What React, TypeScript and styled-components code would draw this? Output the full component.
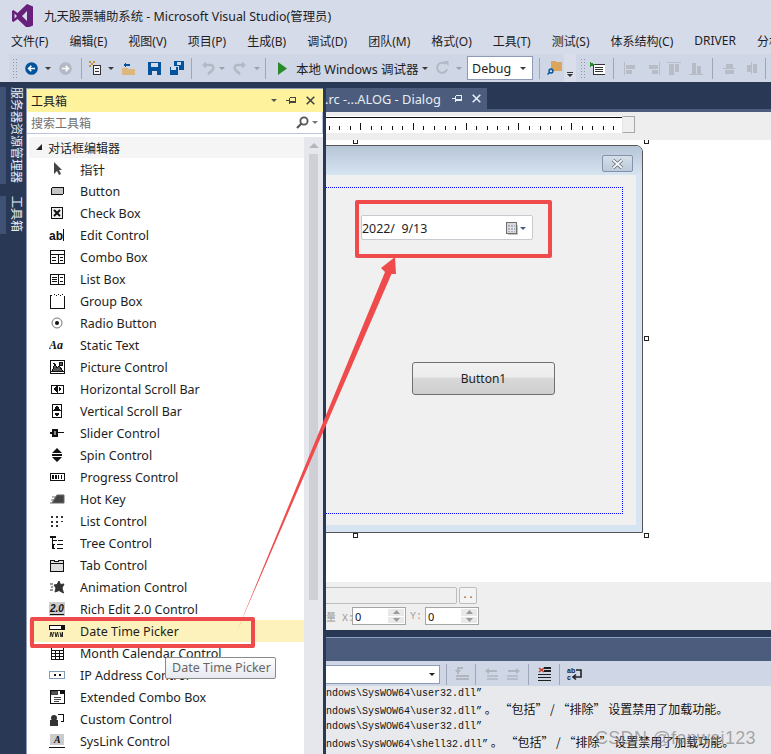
import React from "react";
import styled, { createGlobalStyle } from "styled-components";

const GlobalStyle = createGlobalStyle`
  html, body { margin: 0; padding: 0; background: #293955; }
  * { box-sizing: border-box; }
`;

const UI_FONT = `"Noto Sans", "Noto Sans CJK SC", sans-serif`;
const CJK_FONT = `"Noto Sans CJK SC", "Noto Sans", sans-serif`;
const MONO_FONT = `"Liberation Mono", "Noto Sans CJK SC", monospace`;

const Page = styled.div`
  position: relative;
  width: 771px;
  height: 754px;
  overflow: hidden;
  display: flex;
  flex-direction: column;
  background: #293955;
  color: #1e1e1e;
  font-family: ${UI_FONT};
  font-size: 12px;
`;

const TitleBar = styled.div`
  height: 27px;
  flex: none;
  display: flex;
  align-items: center;
  gap: 11px;
  padding: 5px 0 0 12px;
  background: #d6dbe9;
  font-size: 12.4px;
`;

const MenuBar = styled.div`
  height: 27px;
  flex: none;
  display: flex;
  align-items: center;
  gap: 21px;
  padding-left: 11px;
  background: #d6dbe9;
  white-space: nowrap;
  font-size: 12px;
`;

const ToolStrip = styled.div`
  height: 28px;
  flex: none;
  display: flex;
  align-items: center;
  background: linear-gradient(90deg, #d6dbe9 0, #d6dbe9 9px, #cfd6e5 9px);
  padding-left: 12px;
`;

const Grip = styled.div`
  width: 6px;
  height: 20px;
  flex: none;
  background-image: radial-gradient(#8f97ab 0.7px, transparent 0.8px);
  background-size: 3px 3px;
`;

const Slot = styled.div<{ $w: number }>`
  width: ${(p) => p.$w}px;
  height: 22px;
  flex: none;
  display: flex;
  align-items: center;
  justify-content: center;
`;

const Sep = styled.div<{ $m?: number }>`
  width: 1px;
  height: 21px;
  flex: none;
  background: #9ea6b8;
  margin: 0 ${(p) => p.$m ?? 6}px;
`;

const Caret = styled.div<{ $c?: string }>`
  width: 0;
  height: 0;
  flex: none;
  border-left: 3.5px solid transparent;
  border-right: 3.5px solid transparent;
  border-top: 3.5px solid ${(p) => p.$c ?? "#3a3a3a"};
`;

const RunLabel = styled.span`
  width: 126px;
  flex: none;
  white-space: nowrap;
  font-size: 12.5px;
  margin-left: 2px;
`;

const ConfigCombo = styled.div`
  width: 66px;
  height: 24px;
  flex: none;
  display: flex;
  align-items: center;
  justify-content: space-between;
  padding: 0 6px 0 4px;
  background: #fff;
  border: 1px solid #8e9bb5;
  font-size: 12.5px;
`;

const Overflow = styled.div`
  width: 12px;
  height: 28px;
  flex: none;
  background: #d9deea;
  display: flex;
  flex-direction: column;
  align-items: center;
  justify-content: flex-end;
  gap: 1px;
  padding-bottom: 5px;
`;

const OverflowBar = styled.div`
  width: 6px;
  height: 1px;
  background: #333;
`;

const Main = styled.div`
  flex: 1;
  min-height: 0;
  display: flex;
`;

const Rail = styled.div`
  width: 26px;
  flex: none;
  display: flex;
  flex-direction: column;
  gap: 12px;
  padding-top: 5px;
  background: #293955;
`;

const RailItem = styled.div<{ $h: number }>`
  height: ${(p) => p.$h}px;
  padding-right: 2px;
  background: linear-gradient(90deg, #3f5174 0, #3f5174 6px, transparent 6px);
  color: #e4ecf6;
  font-family: ${CJK_FONT};
  font-size: 12px;
  line-height: 14px;
  writing-mode: vertical-rl;
  text-orientation: sideways;
  white-space: nowrap;
`;

const Toolbox = styled.div`
  width: 297px;
  flex: none;
  margin-top: 6px;
  display: flex;
  flex-direction: column;
  background: #fff;
  border-left: 1px solid #8d9ab8;
  border-top: 1px solid #8d9ab8;
`;

const BoxHeader = styled.div`
  height: 23px;
  flex: none;
  display: flex;
  align-items: center;
  gap: 9px;
  padding: 0 8px 0 4px;
  background: #fff29d;
  font-family: ${CJK_FONT};
  font-size: 12px;
`;

const BoxTitle = styled.span`
  flex: 1;
`;

const SearchRow = styled.div`
  height: 22px;
  flex: none;
  display: flex;
  align-items: center;
  gap: 3px;
  padding: 0 4px;
  border-bottom: 1px solid #bcc5da;
  border-right: 1px solid #bcc5da;
  color: #717171;
  font-family: ${CJK_FONT};
  font-size: 12px;
`;

const SearchText = styled.span`
  flex: 1;
`;

const BoxBody = styled.div`
  flex: 1;
  min-height: 0;
  display: flex;
  border-top: 3px solid #fff;
`;

const List = styled.div`
  width: 277px;
  flex: none;
  padding-left: 2px;
`;

const GroupRow = styled.div`
  height: 21px;
  display: flex;
  align-items: center;
  gap: 6px;
  padding: 0 0 1px 7px;
  background: #f5f5f5;
  font-family: ${CJK_FONT};
  font-size: 12px;
`;

const Row = styled.div<{ $on?: boolean }>`
  height: 22px;
  display: flex;
  align-items: center;
  gap: 15px;
  padding-left: 19px;
  white-space: nowrap;
  font-size: 12.5px;
  background: ${(p) => (p.$on ? "#fdf2bb" : "transparent")};
`;

const RowIcon = styled.div`
  width: 17px;
  height: 18px;
  flex: none;
  display: flex;
  align-items: center;
  justify-content: center;
`;

const Track = styled.div`
  width: 19px;
  flex: none;
  display: flex;
  flex-direction: column;
  align-items: center;
  padding-top: 6px;
  background: #e6e7ec;
`;

const UpArrow = styled.div`
  width: 0;
  height: 0;
  border-left: 5px solid transparent;
  border-right: 5px solid transparent;
  border-bottom: 5px solid #b4b6bf;
`;

const Thumb = styled.div`
  width: 9px;
  height: 446px;
  margin-top: 6px;
  background: #cfd0d6;
`;

const RightCol = styled.div`
  flex: 1;
  min-width: 0;
  margin-left: 3px;
  display: flex;
  flex-direction: column;
`;

const TabStrip = styled.div`
  height: 30px;
  flex: none;
  padding-top: 6px;
  border-bottom: 3px solid #4b5c7c;
`;

const Tab = styled.div`
  width: 161px;
  height: 21px;
  display: flex;
  align-items: center;
  gap: 9px;
  background: #4b5c7c;
  color: #e8eef6;
  font-size: 12.8px;
  white-space: nowrap;
`;

const TabTitle = styled.span`
  width: 118px;
  flex: none;
  margin-left: -1px;
`;

const RulerBand = styled.div`
  height: 28px;
  flex: none;
  display: flex;
  align-items: flex-start;
  padding-top: 4px;
  background: #eeeeef;
`;

const RulerHandle = styled.div`
  width: 13px;
  height: 17px;
  background: #efefef;
  border: 1px solid #a8a8a8;
  border-left-color: #e4e4e4;
`;

const Canvas = styled.div`
  position: relative;
  height: 442px;
  flex: none;
  overflow: hidden;
  background: #fff;
`;

const Dialog = styled.div`
  position: absolute;
  left: -20px;
  top: 5px;
  width: 337px;
  height: 388px;
  display: flex;
  flex-direction: column;
  background: #d7e4f1;
  border: 1px solid #555;
  border-radius: 7px 7px 0 0;
`;

const DialogCaption = styled.div`
  height: 29px;
  flex: none;
  display: flex;
  justify-content: flex-end;
  padding: 9px 9px 0 0;
  background: linear-gradient(#b6c5d7, #d7e4f1);
  border-radius: 6px 6px 0 0;
`;

const CloseBox = styled.div`
  width: 31px;
  height: 17px;
  display: flex;
  align-items: center;
  justify-content: center;
  background: linear-gradient(#d6dfe9, #bccada);
  border: 1px solid #8493ab;
  border-radius: 2px;
`;

const Client = styled.div`
  position: relative;
  height: 350px;
  margin-right: 6px;
  background: #f0f0f0;
`;

const GuideRect = styled.div`
  position: absolute;
  left: -10px;
  top: 12px;
  width: 326px;
  height: 327px;
  border: 1px dotted #0000ff;
`;

const DatePicker = styled.div`
  position: absolute;
  left: 54px;
  top: 40px;
  width: 172px;
  height: 25px;
  display: flex;
  align-items: center;
  gap: 2px;
  padding: 1px 6px 0 0;
  background: #fff;
  border: 1px solid #c9c9d0;
  border-radius: 2px;
  font-size: 12.4px;
`;

const DateText = styled.span`
  flex: 1;
  white-space: pre;
`;

const DialogButton = styled.div`
  position: absolute;
  left: 105px;
  top: 187px;
  width: 143px;
  height: 33px;
  display: flex;
  align-items: center;
  justify-content: center;
  background: linear-gradient(#f2f2f2 0, #ececec 45%, #d8d8d8 50%, #cfcfcf 100%);
  border: 1px solid #707070;
  border-radius: 3px;
  font-size: 12px;
`;

const Handle = styled.div<{ $x: number; $y: number }>`
  position: absolute;
  left: ${(p) => p.$x - 3}px;
  top: ${(p) => p.$y - 3}px;
  width: 5px;
  height: 5px;
  background: #fff;
  border: 1px solid #222;
`;

const PropBar = styled.div`
  height: 48px;
  flex: none;
  display: flex;
  flex-direction: column;
  gap: 3px;
  padding-top: 5px;
  background: #efefef;
  font-family: ${MONO_FONT};
  font-size: 10px;
  color: #9a9a9a;
`;

const PropRow = styled.div`
  display: flex;
  align-items: center;
`;

const PathInput = styled.div`
  width: 131px;
  height: 17px;
  background: #efefef;
  border: 1px solid #bdbdbd;
  border-left: none;
  border-radius: 0 2px 2px 0;
`;

const DotsButton = styled.div`
  width: 18px;
  height: 17px;
  margin-left: 2px;
  text-align: center;
  line-height: 15px;
  color: #555;
  background: #f4f4f4;
  border: 1px solid #bdbdbd;
  border-radius: 2px;
`;

const AxisLabel = styled.span<{ $w: number }>`
  width: ${(p) => p.$w}px;
  flex: none;
  white-space: nowrap;
  text-align: right;
  padding-right: 3px;
`;

const SpinInput = styled.div`
  width: 54px;
  height: 18px;
  display: flex;
  align-items: center;
  justify-content: space-between;
  padding: 0 1px 0 2px;
  background: #fff;
  border: 1px solid #a5a5a5;
  color: #111;
  font-family: ${UI_FONT};
  font-size: 11px;
`;

const SpinBox = styled.div`
  width: 16px;
  height: 14px;
  display: flex;
  flex-direction: column;
  gap: 1px;
`;

const SpinPart = styled.div`
  flex: 1;
  display: flex;
  align-items: center;
  justify-content: center;
  background: #e9e9e9;
`;

const BottomPanel = styled.div`
  flex: 1;
  min-height: 0;
  display: flex;
  flex-direction: column;
  padding-top: 7px;
`;

const PanelHead = styled.div`
  height: 24px;
  flex: none;
  background: #4b5c7c;
  border-top: 1px solid #8ea0bf;
`;

const OutputBar = styled.div`
  height: 26px;
  flex: none;
  display: flex;
  align-items: center;
  background: #cfd6e5;
`;

const SourceCombo = styled.div`
  width: 114px;
  height: 19px;
  flex: none;
  display: flex;
  align-items: center;
  justify-content: flex-end;
  padding-right: 4px;
  background: #fff;
  border: 1px solid #8e9bb5;
  border-left: none;
`;

const OutputBody = styled.div`
  flex: 1;
  margin-top: -1px;
  background: #e8e9ed;
  font-family: ${MONO_FONT};
  font-size: 10px;
  line-height: 15px;
  white-space: pre;
  color: #111;
`;

const OutputCjk = styled.span`
  font-family: ${CJK_FONT};
  font-size: 12px;
`;

const Watermark = styled.div`
  position: absolute;
  left: 595px;
  top: 728px;
  font-family: "Liberation Sans", sans-serif;
  font-size: 18px;
  letter-spacing: 0.3px;
  color: rgba(120, 120, 120, 0.62);
  white-space: nowrap;
`;

const Tooltip = styled.div`
  position: absolute;
  left: 165px;
  top: 657px;
  width: 111px;
  height: 22px;
  padding-left: 6px;
  font-size: 12.5px;
  line-height: 20px;
  color: #666;
  background: linear-gradient(#ffffff, #e6e8f0);
  border: 1px solid #8a8a8a;
  border-radius: 2px;
  white-space: nowrap;
`;

const RedBox = styled.div<{ $x: number; $y: number; $w: number; $h: number }>`
  position: absolute;
  left: ${(p) => p.$x}px;
  top: ${(p) => p.$y}px;
  width: ${(p) => p.$w}px;
  height: ${(p) => p.$h}px;
  border: 4px solid #ef4b4d;
  border-radius: 2px;
`;

const ArrowLayer = styled.svg`
  position: absolute;
  left: 0;
  top: 0;
`;

/* ---------- drawings ---------- */

const Ico = ({ children, w = 16, h = 16 }: { children: React.ReactNode; w?: number; h?: number }) => (
  <svg width={w} height={h} viewBox={`0 0 ${w} ${h}`} fill="none" shapeRendering="crispEdges">
    {children}
  </svg>
);

const K = "#111";

const toolIcons: Record<string, React.ReactNode> = {
  pointer: <path d="M5 1v12l3-3 2 4 2-1-2-4h3z" fill="#444" shapeRendering="auto" />,
  button: <rect x="2.5" y="4.5" width="12" height="7" rx="1.5" fill="#c4c4c4" stroke={K} />,
  check: (
    <>
      <rect x="2.5" y="2.5" width="11" height="11" fill="#eee" stroke={K} />
      <path d="M5 5l6 6M11 5l-6 6" stroke={K} strokeWidth="2" shapeRendering="auto" />
    </>
  ),
  edit: (
    <>
      <text x="0" y="13" fontFamily="Liberation Sans" fontWeight="700" fontSize="12" fill={K}>ab</text>
      <path d="M14.5 2v12" stroke={K} />
    </>
  ),
  combo: (
    <>
      <rect x="1.5" y="1.5" width="14" height="13" fill="#fff" stroke={K} />
      <path d="M1 5.5h15M9.5 5v10M3 8.5h4M3 11.5h4M11 8.5h3M11 11.5h3" stroke={K} />
    </>
  ),
  list: (
    <>
      <rect x="1.5" y="3.5" width="14" height="10" fill="#fff" stroke={K} />
      <path d="M9.5 3v10M3 6.5h5M3 8.5h5M3 10.5h5M11 6.5h3M11 10.5h3" stroke={K} />
    </>
  ),
  group: (
    <>
      <path d="M1.5 3v12.500h14V3M1 2.500h2" stroke={K} />
      <path d="M5 1h1v1H5zM7 2h1v1H7zM9 1h1v1H9zM11 2h1v1h-1zM13 1h1v1h-1z" fill={K} />
    </>
  ),
  radio: (
    <>
      <circle cx="8" cy="8" r="5" fill="#fff" stroke="#777" shapeRendering="auto" />
      <circle cx="8" cy="8" r="2" fill={K} shapeRendering="auto" />
    </>
  ),
  statictext: (
    <text x="0" y="12" fontFamily="Liberation Serif" fontStyle="italic" fontWeight="700" fontSize="12" fill={K}>Aa</text>
  ),
  picture: (
    <>
      <rect x="1.5" y="1.5" width="14" height="13" fill="#fff" stroke={K} />
      <path d="M3 12l3-7 2 4 2-2 4 5zM4 4h2M10 3h3v3h-3z" fill="#555" stroke={K} />
    </>
  ),
  hscroll: (
    <>
      <rect x="2.5" y="4.5" width="12" height="8" fill="#fff" stroke={K} />
      <path d="M8.5 4v8M7 6v4L5 8zM10 6v4l2-2z" fill={K} stroke={K} />
    </>
  ),
  vscroll: (
    <>
      <rect x="3.5" y="1.5" width="9" height="13" fill="#fff" stroke={K} />
      <path d="M4 7.5h8M8 3l2 3H6zM8 13l2-3H6z" fill={K} stroke={K} />
    </>
  ),
  slider: <path d="M1 8h2M4 5h4v6H4zM8 7.5h7" fill="#888" stroke={K} strokeWidth="1.5" />,
  spin: <path d="M8 1l5 5H3zM8 15l5-5H3zM3 7h10v2H3z" fill={K} shapeRendering="auto" />,
  progress: (
    <>
      <rect x="1.5" y="4.5" width="14" height="7" fill="#fff" stroke={K} />
      <path d="M3 6h2v4H3zM6 6h2v4H6zM9 6h1v4H9zM12 6h1v4h-1z" fill={K} />
    </>
  ),
  hotkey: <path d="M8 4h7v8H3zM3 6h4M2 9h3M1 12h2" fill="#444" stroke="#666" shapeRendering="auto" />,
  listctrl: (
    <path d="M2 3h2v2H2zM7 3h2v2H7zM12 3h2v2h-2zM2 8h2v2H2zM7 8h2v2H7zM12 8h2v1h-2zM2 12h2v2H2zM7 12h2v2H7z" fill="#333" />
  ),
  tree: <path d="M1 2h6M3.5 2v12M8 5.5h-4M5.5 9.5H4v4h2M9 5.5h5M8 9.5h6M8 13.5h6" stroke={K} strokeWidth="1.4" />,
  tab: (
    <>
      <path d="M1.5 14.5V3.5h4v1h4v-1h5v11z" fill="#ddd" stroke={K} />
      <path d="M2 6.5h12" stroke={K} />
    </>
  ),
  animation: (
    <path d="M10 2l1.5 3.5L15 5l-2 4 1.5 5-4.5-2.5L6 13l1-4-2-3 3-.5zM1 5h3M2 8h2M1 11h3" fill="#333" stroke="#333" shapeRendering="auto" />
  ),
  rich: (
    <>
      <rect x="0" y="1" width="16" height="14" fill="#ccc" />
      <text x="1" y="11" fontFamily="Liberation Sans" fontStyle="italic" fontWeight="700" fontSize="10" fill={K}>2.0</text>
      <path d="M1 13.5h14" stroke={K} />
    </>
  ),
  date: (
    <>
      <rect x="0.5" y="2.5" width="15" height="4" fill="#fff" stroke={K} />
      <path d="M12 3h3v3h-3z" fill={K} />
      <path d="M1 14l1-5 1.500 5 1-5M6 9l1 5 1.500-5 1 5M11 9l1 5 1.500-5v5" stroke={K} strokeWidth="0.9" shapeRendering="auto" />
    </>
  ),
  month: (
    <path d="M2.5 2.5h12v12h-12zM2 5.5h13M2 8.5h13M2 11.5h13M6.5 5v10M10.5 5v10" stroke={K} fill="#fff" />
  ),
  ip: (
    <>
      <rect x="0.5" y="4.5" width="15" height="7" fill="#fff" stroke="#7f9db9" />
      <path d="M5 7h2v2H5zM10 7h2v2h-2z" fill={K} />
    </>
  ),
  extcombo: (
    <>
      <rect x="1.5" y="1.5" width="14" height="13" fill="#fff" stroke={K} />
      <path d="M2 2h6v3H2zM5 8.5h7M5 10.5h7M5 12.5h5" fill="#555" stroke="#444" />
      <path d="M11 2h4v3h-4z" fill={K} />
    </>
  ),
  custom: (
    <>
      <rect x="1" y="9" width="8" height="6" fill="#333" />
      <circle cx="5" cy="7" r="3" fill="#333" shapeRendering="auto" />
      <path d="M8.5 3.5h6v7h-3" stroke={K} />
    </>
  ),
  syslink: (
    <>
      <rect x="1" y="1" width="14" height="11" fill="#ccc" />
      <text x="5" y="10" fontFamily="Liberation Serif" fontStyle="italic" fontWeight="700" fontSize="10" fill={K}>A</text>
      <path d="M0 14.5h16" stroke={K} />
    </>
  ),
};

const tools: [string, string][] = [
  ["pointer", "指针"],
  ["button", "Button"],
  ["check", "Check Box"],
  ["edit", "Edit Control"],
  ["combo", "Combo Box"],
  ["list", "List Box"],
  ["group", "Group Box"],
  ["radio", "Radio Button"],
  ["statictext", "Static Text"],
  ["picture", "Picture Control"],
  ["hscroll", "Horizontal Scroll Bar"],
  ["vscroll", "Vertical Scroll Bar"],
  ["slider", "Slider Control"],
  ["spin", "Spin Control"],
  ["progress", "Progress Control"],
  ["hotkey", "Hot Key"],
  ["listctrl", "List Control"],
  ["tree", "Tree Control"],
  ["tab", "Tab Control"],
  ["animation", "Animation Control"],
  ["rich", "Rich Edit 2.0 Control"],
  ["date", "Date Time Picker"],
  ["month", "Month Calendar Control"],
  ["ip", "IP Address Control"],
  ["extcombo", "Extended Combo Box"],
  ["custom", "Custom Control"],
  ["syslink", "SysLink Control"],
];

const menus = ["文件(F)", "编辑(E)", "视图(V)", "项目(P)", "生成(B)", "调试(D)", "团队(M)", "格式(O)", "工具(T)", "测试(S)", "体系结构(C)", "DRIVER", "分析(N)"];

const VsLogo = () => (
  <svg width="21" height="24" viewBox="0 0 21 24">
    <path d="M15 0l6 2.5v19L15 24 5.5 15 1.5 18 0 17V7l1.5-1 4 3zM15 7l-5 5 5 5zM2.5 9.5v5l2.5-2.5z" fill="#68217a" fillRule="evenodd" />
  </svg>
);

const PinIcon = ({ c }: { c: string }) => (
  <Ico w={11} h={9}>
    <path d="M0 4.5h3M3.5 1.5v6M3.5 1.5h6v5h-6M3.5 5h6" stroke={c} />
  </Ico>
);

const CrossIcon = ({ c }: { c: string }) => (
  <svg width="9" height="9" viewBox="0 0 9 9">
    <path d="M.7.7l7.6 7.6M8.3.7L.7 8.3" stroke={c} strokeWidth="1.6" />
  </svg>
);

const CaptionCross = () => (
  <svg width="13" height="10" viewBox="0 0 13 10">
    <path d="M2 1l9 8M11 1L2 9" stroke="#5f6670" strokeWidth="3.400" />
    <path d="M2 1l9 8M11 1L2 9" stroke="#f7f8fa" strokeWidth="1.800" />
  </svg>
);

const BackIcon = ({ c, flip }: { c: string; flip?: boolean }) => (
  <svg width="13" height="13" viewBox="0 0 13 13" style={flip ? { transform: "scaleX(-1)" } : undefined}>
    <circle cx="6.5" cy="6.5" r="6.3" fill={c} />
    <path d="M10 6.5H4M6.3 3.8L3.6 6.5l2.7 2.7" stroke="#fff" strokeWidth="1.6" fill="none" />
  </svg>
);

const NewProjectIcon = () => (
  <Ico>
    <path d="M5.5 5.5h7v9h-7z" fill="#f4f4f4" stroke="#333" />
    <path d="M7 8.5h4M7 11h4" stroke="#333" />
    <path d="M1 1h2v2H1zM5 1h2v2H5zM3 3h2v2H3zM1 5h2v2H1z" fill="#c8913f" />
  </Ico>
);

const OpenIcon = () => (
  <Ico w={15} h={16}>
    <path d="M1 8h5l1 1h7v6H1z" fill="#dcb67a" />
    <path d="M2 5l3-3v2h4v2H5v2z" fill="#00539c" />
  </Ico>
);

const SaveIcon = () => (
  <Ico w={13} h={13}>
    <path d="M0 0h13v13H0z" fill="#00539c" />
    <path d="M3 1h7v4H3zM4 9h5v4H4z" fill="#d6dbe9" />
  </Ico>
);

const SaveAllIcon = () => (
  <Ico w={15} h={14}>
    <path d="M5 0h10v9H5z" fill="#00539c" />
    <path d="M8 1h4v3H8z" fill="#d6dbe9" />
    <path d="M0 5h9v9H0z" fill="#00539c" stroke="#cfd6e5" />
    <path d="M2 6h5v3H2z" fill="#d6dbe9" />
  </Ico>
);

const UndoIcon = ({ flip }: { flip?: boolean }) => (
  <svg width="13" height="14" viewBox="0 0 13 14" style={flip ? { transform: "scaleX(-1)" } : undefined}>
    <path d="M2.5 4h6a3 3 0 0 1 1.5 5.5L6 13" stroke="#b3b8c4" strokeWidth="2.4" fill="none" />
    <path d="M0 4l4-3.500v7z" fill="#b3b8c4" />
  </svg>
);

const RefreshIcon = () => (
  <svg width="14" height="14" viewBox="0 0 14 14">
    <path d="M10.500 3A5 5 0 1 0 12 8" stroke="#b3b8c4" strokeWidth="2" fill="none" />
    <path d="M8.500 0h5v5z" fill="#b3b8c4" />
  </svg>
);

const FindFolderIcon = () => (
  <Ico w={16} h={16}>
    <path d="M4 1h4l1 1h6v9H4z" fill="#d9a65c" />
    <circle cx="4" cy="11" r="2" stroke="#00539c" strokeWidth="1.4" shapeRendering="auto" />
    <path d="M2.500 12.500L0.500 14.500" stroke="#00539c" strokeWidth="1.4" shapeRendering="auto" />
  </Ico>
);

const ImmediateIcon = () => (
  <Ico w={15} h={13}>
    <path d="M3 2h12v10H3z" fill="#fff" stroke="#333" />
    <path d="M5 5h8M5 7h8M5 9h8" stroke="#333" />
    <path d="M0 0l5 2.500L0 5z" fill="#2b8a2b" />
  </Ico>
);

const alignPaths = [
  "M1 1v13M3 4h8v3H3zM3 9h5v3H3z",
  "M14 1v13M4 4h8v3H4zM7 9h5v3H7z",
  "M0 1.500h14M2 3h4v10H2zM8 3h3v7H8z",
  "M0 13.500h14M3 2h3v10H3zM8 5h3v7H8z",
];

const centerPaths = ["M1 7.500h12M4 3h6v3H4zM3 9h8v3H3z", "M7.500 1v12M3 4h3v6H3zM9 3h3v8H9z"];

const GrayGlyph = ({ d }: { d: string }) => (
  <Ico w={15} h={15}>
    <path d={d} fill="#b8bcc6" stroke="#b8bcc6" />
  </Ico>
);

const SearchGlass = () => (
  <svg width="13" height="13" viewBox="0 0 13 13">
    <circle cx="8" cy="5" r="3.600" stroke="#555" strokeWidth="1.800" fill="none" />
    <path d="M5.500 7.500L1 12" stroke="#555" strokeWidth="2.200" />
  </svg>
);

const CalendarIcon = () => (
  <Ico w={12} h={13}>
    <path d="M0.500 0.500h10v11h-10z" fill="#d8d8d8" stroke="#707070" />
    <path d="M2 3h7v7H2z" fill="#a9b1bf" />
    <path d="M2 5.500h7M2 8h7M4.500 3v7M7 3v7" stroke="#e4e4e4" />
    <path d="M11 3h1v10H2v-1h9z" fill="#c4c4c4" />
  </Ico>
);

const Ruler = () => {
  const ticks = [];
  for (let i = 0; i < 28; i++) {
    const x = 2.5 + i * 10.55;
    ticks.push(<path key={i} d={`M${Math.round(x) + 0.5} ${i % 5 === 3 ? 7 : 10}V14`} stroke="#111" />);
  }
  return (
    <svg width="296" height="17" viewBox="0 0 296 17" shapeRendering="crispEdges">
      <rect width="296" height="17" fill="#fff" />
      <path d="M0 1.500h296" stroke="#111" strokeWidth="1.500" />
      {ticks}
    </svg>
  );
};

const SpinGlyph = ({ up }: { up?: boolean }) => (
  <svg width="7" height="4" viewBox="0 0 7 4">
    <path d={up ? "M3.500 0L7 4H0z" : "M3.500 4L7 0H0z"} fill="#9b9b9b" />
  </svg>
);

const SpinField = () => (
  <SpinInput>
    0
    <SpinBox>
      <SpinPart>
        <SpinGlyph up />
      </SpinPart>
      <SpinPart>
        <SpinGlyph />
      </SpinPart>
    </SpinBox>
  </SpinInput>
);

const OutLeft = () => (
  <Ico w={15} h={15}>
    <path d="M8 1H3v3M1 3l2 3 2-3M1 9h13M1 12h13" stroke="#b0b5c0" strokeWidth="1.500" />
  </Ico>
);

const OutLines = ({ flip }: { flip?: boolean }) => (
  <svg width="13" height="12" viewBox="0 0 13 12" style={flip ? { transform: "scaleX(-1)" } : undefined}>
    <path d="M0 3l4-3v2h8v2H4v2zM2 8h11M2 11h11" fill="#b0b5c0" stroke="none" />
    <path d="M2 8h11M2 11h11" stroke="#b0b5c0" strokeWidth="1.500" />
  </svg>
);

const ClearIcon = () => (
  <Ico w={14} h={15}>
    <path d="M2 1l5 4M7 1L2 5" stroke="#c6382a" strokeWidth="1.600" shapeRendering="auto" />
    <path d="M7 1h7M7 4h7M1 7.500h13M1 10.500h13M1 13.500h13" stroke="#1e1e1e" strokeWidth="1.400" />
  </Ico>
);

const WrapIcon = () => (
  <svg width="15" height="15" viewBox="0 0 15 15">
    <text x="0" y="6" fontFamily="Liberation Sans" fontWeight="700" fontSize="7" fill="#222">ab</text>
    <text x="0" y="13" fontFamily="Liberation Sans" fontWeight="700" fontSize="7" fill="#222">c</text>
    <path d="M9 3h5v7H7M9 7.500l-3 2.500 3 2.500" stroke="#222" strokeWidth="1.600" fill="none" />
  </svg>
);

const LOAD_NOTE = " 。 “包括” / “排除” 设置禁用了加载功能。";

const outputLines: [string, string?][] = [
  ["ndows\\SysWOW64\\user32.dll”"],
  ["ndows\\SysWOW64\\user32.dll”", LOAD_NOTE],
  ["ndows\\SysWOW64\\user32.dll”"],
  ["ndows\\SysWOW64\\shell32.dll”", LOAD_NOTE],
  ["ndows\\SysWOW64\\shell32.dll”"],
];

export default function App() {
  return (
    <Page>
      <GlobalStyle />
      <TitleBar>
        <VsLogo />
        九天股票辅助系统 - Microsoft Visual Studio(管理员)
      </TitleBar>
      <MenuBar>
        {menus.map((m) => (
          <span key={m}>{m}</span>
        ))}
      </MenuBar>
      <ToolStrip>
        <Grip />
        <Slot $w={27}>
          <BackIcon c="#00539c" />
        </Slot>
        <Caret />
        <Slot $w={28}>
          <BackIcon c="#b3b8c4" flip />
        </Slot>
        <Sep $m={2} />
        <Slot $w={24}>
          <NewProjectIcon />
        </Slot>
        <Caret />
        <Slot $w={28}>
          <OpenIcon />
        </Slot>
        <Slot $w={24}>
          <SaveIcon />
        </Slot>
        <Slot $w={20}>
          <SaveAllIcon />
        </Slot>
        <Sep $m={5} />
        <Slot $w={22}>
          <UndoIcon />
        </Slot>
        <Caret $c="#9aa0ac" />
        <Slot $w={29}>
          <UndoIcon flip />
        </Slot>
        <Caret $c="#9aa0ac" />
        <Sep $m={5} />
        <Slot $w={23}>
          <svg width="11" height="13" viewBox="0 0 11 13">
            <path d="M1 0l9 6.500L1 13z" fill="#2a8a2a" />
          </svg>
        </Slot>
        <RunLabel>本地 Windows 调试器</RunLabel>
        <Caret />
        <Slot $w={28}>
          <RefreshIcon />
        </Slot>
        <Caret $c="#9aa0ac" />
        <Slot $w={5} />
        <ConfigCombo>
          Debug
          <Caret />
        </ConfigCombo>
        <Sep $m={6} />
        <Slot $w={18}>
          <FindFolderIcon />
        </Slot>
        <Overflow>
          <OverflowBar />
          <Caret $c="#333" />
        </Overflow>
        <Slot $w={4} />
        <Grip />
        <Slot $w={22}>
          <ImmediateIcon />
        </Slot>
        <Sep $m={5} />
        {alignPaths.map((d) => (
          <Slot key={d} $w={22}>
            <GrayGlyph d={d} />
          </Slot>
        ))}
        <Sep $m={5} />
        {centerPaths.map((d) => (
          <Slot key={d} $w={22}>
            <GrayGlyph d={d} />
          </Slot>
        ))}
        <Sep $m={3} />
      </ToolStrip>
      <Main>
        <Rail>
          <RailItem $h={97}>服务器资源管理器</RailItem>
          <RailItem $h={38}>工具箱</RailItem>
        </Rail>
        <Toolbox>
          <BoxHeader>
            <BoxTitle>工具箱</BoxTitle>
            <Caret $c="#555" />
            <PinIcon c="#444" />
            <CrossIcon c="#444" />
          </BoxHeader>
          <SearchRow>
            <SearchText>搜索工具箱</SearchText>
            <SearchGlass />
            <Caret $c="#777" />
          </SearchRow>
          <BoxBody>
            <List>
              <GroupRow>
                <svg width="6" height="6" viewBox="0 0 6 6">
                  <path d="M6 0v6H0z" fill="#222" />
                </svg>
                对话框编辑器
              </GroupRow>
              {tools.map(([icon, label]) => (
                <Row key={label} $on={icon === "date"}>
                  <RowIcon>
                    <Ico>{toolIcons[icon]}</Ico>
                  </RowIcon>
                  {label}
                </Row>
              ))}
            </List>
            <Track>
              <UpArrow />
              <Thumb />
            </Track>
          </BoxBody>
        </Toolbox>
        <RightCol>
          <TabStrip>
            <Tab>
              <TabTitle>.rc -...ALOG - Dialog</TabTitle>
              <PinIcon c="#e8eef6" />
              <CrossIcon c="#e8eef6" />
            </Tab>
          </TabStrip>
          <RulerBand>
            <Ruler />
            <RulerHandle />
          </RulerBand>
          <Canvas>
            <Dialog>
              <DialogCaption>
                <CloseBox>
                  <CaptionCross />
                </CloseBox>
              </DialogCaption>
              <Client>
                <GuideRect />
                <DatePicker>
                  <DateText>2022/  9/13</DateText>
                  <CalendarIcon />
                  <Caret $c="#4b5c7c" />
                </DatePicker>
                <DialogButton>Button1</DialogButton>
              </Client>
            </Dialog>
            <Handle $x={30} $y={2} />
            <Handle $x={321} $y={2} />
            <Handle $x={321} $y={199} />
            <Handle $x={321} $y={396} />
            <Handle $x={30} $y={396} />
          </Canvas>
          <PropBar>
            <PropRow>
              <PathInput />
              <DotsButton>..</DotsButton>
            </PropRow>
            <PropRow>
              <AxisLabel $w={26}>量 X:</AxisLabel>
              <SpinField />
              <AxisLabel $w={19}>Y:</AxisLabel>
              <SpinField />
            </PropRow>
          </PropBar>
          <BottomPanel>
            <PanelHead />
            <OutputBar>
              <SourceCombo>
                <Caret $c="#222" />
              </SourceCombo>
              <Sep $m={6} />
              <Slot $w={18}>
                <OutLeft />
              </Slot>
              <Sep $m={4} />
              <Slot $w={22}>
                <OutLines />
              </Slot>
              <Slot $w={22}>
                <OutLines flip />
              </Slot>
              <Sep $m={4} />
              <Slot $w={22}>
                <ClearIcon />
              </Slot>
              <Sep $m={4} />
              <Slot $w={20}>
                <WrapIcon />
              </Slot>
            </OutputBar>
            <OutputBody>
              {outputLines.map(([text, note], i) => (
                <div key={i}>
                  {text}
                  {note && <OutputCjk>{note}</OutputCjk>}
                </div>
              ))}
            </OutputBody>
          </BottomPanel>
        </RightCol>
      </Main>
      <Tooltip>Date Time Picker</Tooltip>
      <RedBox $x={355} $y={200} $w={197} $h={58} />
      <RedBox $x={30} $y={617} $w={225} $h={31} />
      <ArrowLayer width="771" height="754" viewBox="0 0 771 754">
        <path d="M237 631L385 272L381 268L395 257L396 274L391.500 274Z" fill="#ef4b4d" />
      </ArrowLayer>
      <Watermark>CSDN @fanwei123</Watermark>
    </Page>
  );
}
